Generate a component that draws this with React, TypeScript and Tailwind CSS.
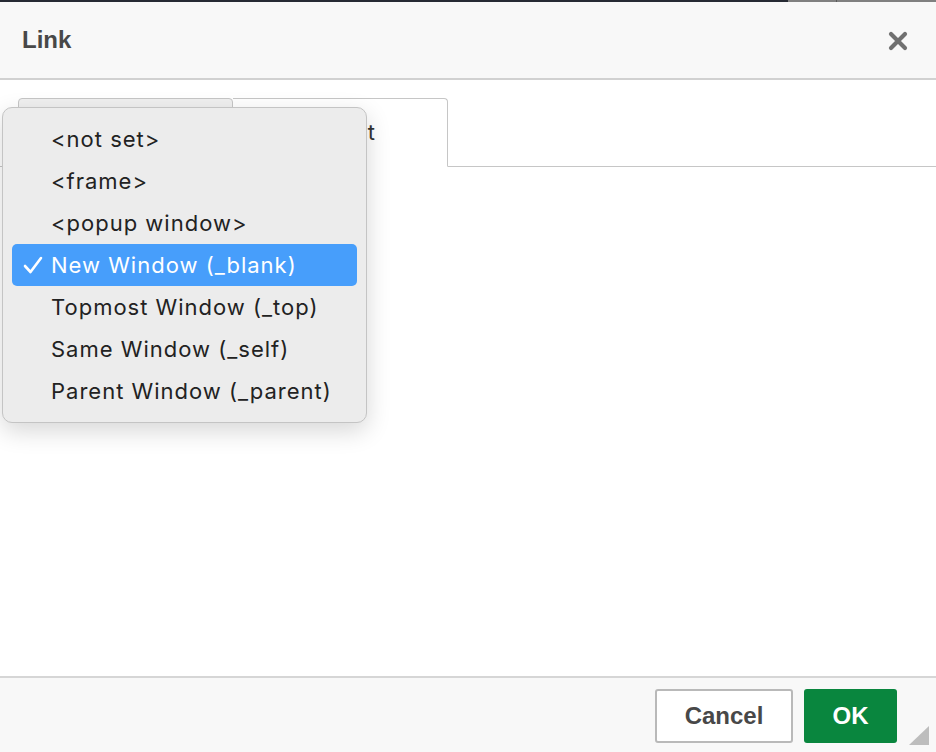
import React from 'react';

const options = [
  '<not set>',
  '<frame>',
  '<popup window>',
  'New Window (_blank)',
  'Topmost Window (_top)',
  'Same Window (_self)',
  'Parent Window (_parent)',
];

export default function App() {
  const selected = 3;

  return (
    <div className="relative w-[936px] h-[752px] overflow-hidden bg-white flex flex-col font-['Liberation_Sans',Arial,sans-serif]">
      {/* strip of the page behind the dialog */}
      <div className="flex h-[2px] shrink-0">
        <div className="w-[788px] bg-[#262a33]" />
        <div className="w-[48px] bg-[#808080]" />
        <div className="w-[1px] bg-[#5a5a5a]" />
        <div className="flex-1 bg-[#808080]" />
      </div>

      {/* header */}
      <div className="h-[78px] shrink-0 bg-[#f8f8f8] border-b-2 border-[#d1d1d1] flex items-center justify-between pl-[22px] pr-[27px]">
        <span className="text-[24px] font-bold text-[#484848]">Link</span>
        <svg width="22" height="22" viewBox="0 0 22 22" className="mt-[2px]">
          <path d="M4 4 L18 18 M18 4 L4 18" stroke="#707070" strokeWidth="4.2" strokeLinecap="round" />
        </svg>
      </div>

      {/* body */}
      <div className="flex-1 bg-white pt-[18px]">
        <div className="flex items-end border-b border-[#c6c6c6] h-[69px]">
          <div className="w-[18px]" />
          <div className="w-[215px] h-[69px] -mb-px bg-[#f0f0f0] border border-[#c6c6c6] rounded-t-[4px] flex items-center justify-center text-[22px] text-[#333]">
            Link Info
          </div>
          <div className="w-[215px] h-[69px] -mb-px bg-white border border-b-white border-l-0 border-[#c6c6c6] rounded-tr-[4px] flex items-center justify-center text-[22px] text-[#333] font-['Inter',sans-serif] tracking-[0.9px]">
            Target
          </div>
        </div>
      </div>

      {/* footer */}
      <div className="h-[76px] shrink-0 bg-[#f8f8f8] border-t-2 border-[#d6d6d6] flex items-start justify-end pt-[11px] pr-[39px] gap-[11px] relative">
        <button className="w-[138px] h-[54px] bg-white border-2 border-[#b9b9b9] rounded-[3px] text-[24px] font-bold text-[#484848]">
          Cancel
        </button>
        <button className="w-[93px] h-[54px] bg-[#09863e] rounded-[3px] text-[24px] font-bold text-white">
          OK
        </button>
        <svg width="22" height="20" viewBox="0 0 22 20" className="absolute right-[6px] bottom-[6px]">
          <path d="M21 0 L21 19 L1 19 Z" fill="#bdbdbd" />
        </svg>
      </div>

      {/* open target dropdown */}
      <div className="absolute left-[2px] top-[107px] w-[365px] h-[316px] bg-[#ececec] border border-[#c4c4c4] rounded-[10px] shadow-[0_8px_24px_rgba(0,0,0,0.16)] px-[9px] pt-[10px] font-['Inter',sans-serif]">
        {options.map((o, i) => (
          <div
            key={o}
            className={`h-[42px] flex items-center rounded-[5px] text-[22px] ${
              i === selected ? 'bg-[#479efb] text-white' : 'text-[#222222]'
            }`}
          >
            <span className="w-[39px] flex justify-center pl-[2px]">
              {i === selected && (
                <svg width="20" height="18" viewBox="0 0 20 18">
                  <path d="M2 10 L7.5 16 L18 2" stroke="white" strokeWidth="2.6" fill="none" strokeLinecap="round" strokeLinejoin="round" />
                </svg>
              )}
            </span>
            <span className="tracking-[1px]">{o}</span>
          </div>
        ))}
      </div>
    </div>
  );
}
